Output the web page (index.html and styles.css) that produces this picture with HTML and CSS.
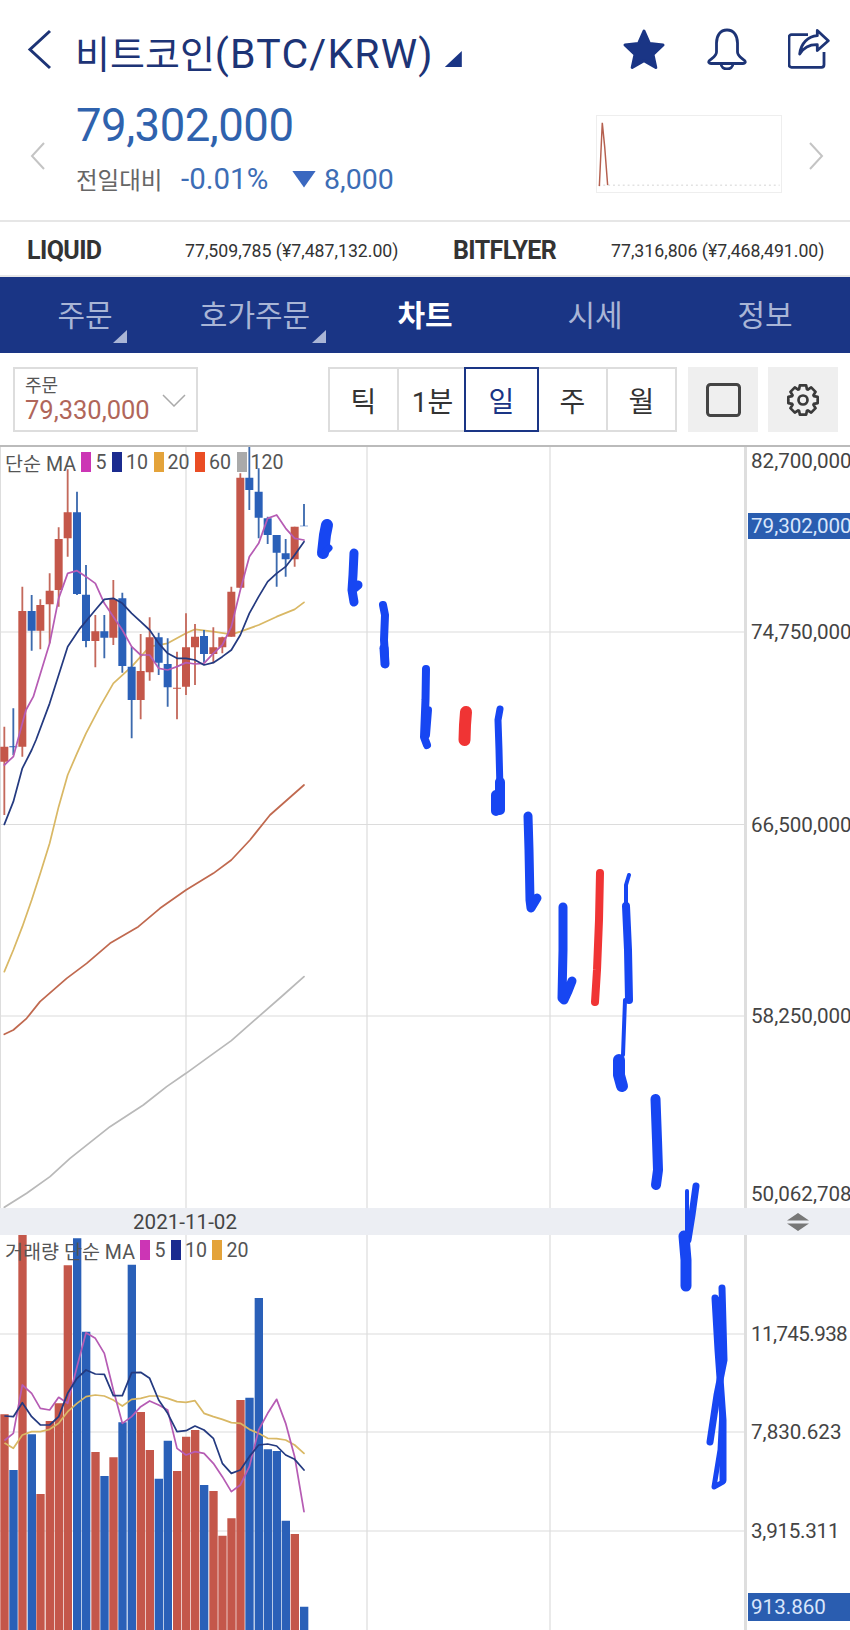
FILE: index.html
```html
<!DOCTYPE html>
<html lang="ko">
<head>
<meta charset="utf-8">
<title>비트코인 차트</title>
<link rel="stylesheet" href="styles.css">
</head>
<body>
<div class="page">
  <header class="head">
    <svg class="back" viewBox="0 0 25 41"><path d="M23 2 3 20.500 23 39"/></svg>
    <h1 class="title">비트코인<span class="title-latin">(BTC/KRW)</span></h1>
    <span class="title-tri"></span>
    <div class="head-icons">
      <svg class="i-star" viewBox="0 0 44 42"><path d="M22 3 27.500 15.500 41 17 31 26.500 33.800 39.500 22 32.800 10.200 39.500 13 26.500 3 17 16.500 15.500z"/></svg>
      <svg class="i-bell" viewBox="0 0 40 42"><path d="M20 2C13 2 9.500 8 9.500 15V24C9.500 28 5 30 2.500 32.500 1 34 2 35.500 4 35.500H36C38 35.500 39 34 37.500 32.500 35 30 30.500 28 30.500 24V15C30.500 8 27 2 20 2ZM14 35.500C14 39 17 41 20 41S26 39 26 35.500"/></svg>
      <svg class="i-share" viewBox="0 0 42 41"><path d="M20 5.700H3.500A2.500 2.500 0 0 0 1 8.200V35.800A2.500 2.500 0 0 0 3.500 38.300H33.500A2.500 2.500 0 0 0 36 35.800V23"/><path d="M29.300 1.500 40.300 11.700 29.300 21.500V15.700C22 15.500 16 18 11.700 25 13 14 20 7.500 29.300 6.700Z"/></svg>
    </div>
  </header>

  <section class="quote">
    <svg class="pager" viewBox="0 0 15 28"><path d="M14 1 2 14l12 13"/></svg>
    <div class="quote-main">
      <div class="price">79,302,000</div>
      <div class="change">
        <span class="change-label">전일대비</span>
        <span class="change-rate">-0.01%</span>
        <span class="change-tri"></span>
        <span class="change-val">8,000</span>
      </div>
    </div>
    <div class="spark">
      <svg viewBox="0 0 186 78"><path class="spark-dots" d="M0 71h186"/><path class="spark-line" d="M1 72 4 7l2.500 25 3 39"/></svg>
    </div>
    <svg class="pager" viewBox="0 0 15 28"><path d="M1 1l12 13L1 27"/></svg>
  </section>

  <section class="exch">
    <strong>LIQUID</strong><span>77,509,785 (¥7,487,132.00)</span>
    <strong>BITFLYER</strong><span>77,316,806 (¥7,468,491.00)</span>
  </section>

  <nav class="tabs">
    <a class="tab has-tri">주문</a>
    <a class="tab has-tri">호가주문</a>
    <a class="tab active">차트</a>
    <a class="tab">시세</a>
    <a class="tab">정보</a>
  </nav>

  <section class="tools">
    <div class="select">
      <div class="select-text"><span class="select-label">주문</span><span class="select-val">79,330,000</span></div>
      <svg viewBox="0 0 24 13"><path d="M1 1l11 11L23 1"/></svg>
    </div>
    <div class="seg">
      <span>틱</span><span>1분</span><span class="on">일</span><span>주</span><span>월</span>
    </div>
    <div class="btn btn-first"><svg class="i-square" viewBox="0 0 35 34"><rect x="1.500" y="1.500" width="32" height="31" rx="3"/></svg></div>
    <div class="btn"><svg class="i-gear" viewBox="-17 -17 34 34"><circle r="4.500"/><path d="M10.810-3.930 14.670-3.120V3.120L10.810 3.930 10.420 4.860 12.580 8.170 8.170 12.580 4.860 10.420 3.930 10.810 3.120 14.670H-3.120L-3.930 10.810-4.860 10.420-8.170 12.580-12.580 8.170-10.420 4.860-10.810 3.930-14.670 3.120V-3.120L-10.810-3.930-10.420-4.860-12.580-8.170-8.170-12.580-4.860-10.420-3.930-10.810-3.120-14.670H3.120L3.930-10.810 4.860-10.420 8.170-12.580 12.580-8.170 10.420-4.860Z"/></svg></div>
  </section>

  <section class="chart">
    <div class="pane pane-price">
      <svg class="plot" viewBox="0 445 747 763">
        <path class="grid" d="M186 445V1208M367 445V1208M550 445V1208M0 632H746M0 824.500H746M0 1016H746"/>
        <path class="frame" d="M745.500 445V1208"/>
        <path class="frame-left" d="M.5 445V1208"/>
        <g transform="translate(0 440) scale(.33333)">
          <path class="ma ma120" d="M13 2302 80 2260 150 2210 210 2155 330 2060 430 1995 500 1940 558 1900 620 1855 694 1802 770 1735 850 1665 912 1610"/>
          <path class="ma ma60" d="M13 1783 40 1770 80 1735 120 1685 200 1615 260 1570 330 1510 415 1460 480 1405 558 1350 640 1300 694 1260 750 1200 810 1125 912 1035"/>
          <path class="ma ma20" d="M13 1595 40 1530 67 1460 95 1380 121 1300 149 1210 176 1100 203 1005 231 940 258 880 300 800 340 730 395 680 449 620 503 610 558 580 585 568 640 575 694 583 721 575 776 555 830 530 884 508 912 487"/>
          <path class="wick red" d="M13 860V1125M67 440V950M121 478V628M149 400V610M176 262V500M203 88V350M286 525V682M340 420V615M422 582V838M449 532V722M531 635V838M558 520V765M585 552V735M640 562V670M667 590V640M694 440V590M721 100V445M884 260V380"/>
          <path class="wick blue" d="M40 805V945M95 465V632M231 155V465M258 375V622M313 525V655M367 458V698M395 620V895M476 578V705M503 595V800M612 570V668M748 20V210M776 85V295M803 230V312M830 285V440M857 297V410M912 192V258"/>
          <path class="body red" d="M1 920h24V965H1zM55 513h24V920H55zM109 495h24V572h-24zM137 452h24V493h-24zM164 297h24V450h-24zM191 217h24V295h-24zM274 574h24V603h-24zM328 477h24V593h-24zM410 693h24V780h-24zM437 592h24V697h-24zM519 743h24V746h-24zM546 622h24V740h-24zM573 590h24V622h-24zM628 622h24V642h-24zM655 592h24V622h-24zM682 455h24V590h-24zM709 113h24V443h-24zM872 260h24V358h-24z"/>
          <path class="body blue" d="M28 919h24V922H28zM83 513h24V572H83zM219 217h24V462h-24zM246 464h24V603h-24zM301 574h24V593h-24zM355 475h24V678h-24zM383 680h24V780h-24zM464 592h24V668h-24zM491 672h24V742h-24zM600 588h24V642h-24zM736 113h24V150h-24zM764 155h24V233h-24zM791 235h24V285h-24zM818 285h24V338h-24zM845 340h24V358h-24zM900 257h24V259h-24z"/>
          <path class="ma ma5" d="M13 975 40 950 67 850 78 810 100 770 149 610 176 475 203 400 231 392 258 410 286 430 313 490 340 530 367 570 395 620 422 645 449 645 476 685 503 690 531 680 558 668 585 672 612 670 640 640 667 615 694 560 721 450 748 350 776 310 803 235 830 225 857 265 884 295 912 300"/>
          <path class="ma ma10" d="M13 1153 40 1085 67 985 95 930 108 900 149 790 203 620 240 565 286 510 313 478 340 475 367 490 395 520 422 545 449 570 476 610 503 640 531 655 558 655 585 660 612 675 640 668 667 650 694 630 721 585 748 520 776 470 803 425 830 400 857 380 884 345 912 305"/>
        </g>
      </svg>
      <div class="legend">
        <span class="leg-name">단순 MA</span>
        <i class="sw c5"></i><span>5</span>
        <i class="sw c10"></i><span>10</span>
        <i class="sw c20"></i><span>20</span>
        <i class="sw c60"></i><span>60</span>
        <i class="sw c120"></i><span>120</span>
      </div>
      <div class="axis">
        <span class="tick t1">82,700,000</span>
        <span class="tick now">79,302,000</span>
        <span class="tick t2">74,750,000</span>
        <span class="tick t3">66,500,000</span>
        <span class="tick t4">58,250,000</span>
        <span class="tick t5">50,062,708</span>
      </div>
    </div>

    <div class="split">
      <span class="split-date">2021-11-02</span>
      <svg class="split-handle" viewBox="0 0 22 18"><path d="M11 0l11 7.500H0zM11 18 0 10.500h22z"/></svg>
    </div>

    <div class="pane pane-vol">
      <svg class="plot" viewBox="0 1235 747 395">
        <path class="grid" d="M186 1235V1630M367 1235V1630M550 1235V1630M0 1334H746M0 1432H746M0 1531H746"/>
        <path class="frame" d="M745.500 1235V1630"/>
        <g transform="translate(0 1190) scale(.33333)">
          <path class="body red" d="M1 673h25V1320H1zM55 135h25V1320H55zM109 912h25V1320h-25zM137 693h25V1320h-25zM164 640h25V1320h-25zM191 226h25V1320h-25zM274 786h25V1320h-25zM328 802h25V1320h-25zM410 666h25V1320h-25zM437 780h25V1320h-25zM519 843h25V1320h-25zM546 740h25V1320h-25zM573 720h25V1320h-25zM628 903h25V1320h-25zM655 1037h25V1320h-25zM682 985h25V1320h-25zM709 630h25V1320h-25zM872 1032h25V1320h-25z"/>
          <path class="body blue" d="M28 840h25V1320H28zM83 733h25V1320H83zM219 145h25V1320h-25zM246 425h25V1320h-25zM301 858h25V1320h-25zM355 697h25V1320h-25zM383 224h25V1320h-25zM464 866h25V1320h-25zM491 752h25V1320h-25zM600 885h25V1320h-25zM736 623h25V1320h-25zM764 324h25V1320h-25zM791 778h25V1320h-25zM818 783h25V1320h-25zM845 992h25V1320h-25zM900 1250h25V1320h-25z"/>
          <path class="ma ma20" d="M15 760 40 775 67 735 95 725 121 725 149 718 176 700 203 665 231 640 258 620 286 615 313 618 340 630 367 648 395 628 422 625 449 618 476 618 503 625 531 635 558 637 585 632 612 670 640 680 667 688 694 698 721 700 748 718 776 730 803 745 830 746 857 750 884 765 912 790"/>
          <path class="ma ma5" d="M15 750 40 730 67 585 95 610 121 655 149 660 176 622 203 640 231 530 258 428 286 445 313 490 340 600 367 700 395 680 422 650 449 633 476 645 503 660 531 775 558 795 585 785 612 790 640 820 667 860 694 905 721 885 748 830 776 720 803 670 830 628 857 700 884 800 912 965"/>
          <path class="ma ma10" d="M15 678 40 680 67 638 95 680 121 705 149 705 176 680 203 610 231 565 258 540 286 552 313 553 340 617 367 617 395 548 422 547 449 565 476 630 503 670 531 725 558 722 585 708 612 720 640 745 667 820 694 850 721 840 748 800 776 765 803 762 830 768 857 795 884 808 912 840"/>
        </g>
      </svg>
      <div class="legend">
        <span class="leg-name">거래량 단순 MA</span>
        <i class="sw c5"></i><span>5</span>
        <i class="sw c10"></i><span>10</span>
        <i class="sw c20"></i><span>20</span>
      </div>
      <div class="axis">
        <span class="tick v1">11,745.938</span>
        <span class="tick v2">7,830.623</span>
        <span class="tick v3">3,915.311</span>
        <span class="tick now-vol">913.860</span>
      </div>
    </div>

    <svg class="ink" viewBox="0 445 850 1185">
      <path class="pen w12" d="M327 525 325 535 323 553"/>
      <path class="pen w7" d="M324 553 329 548"/>
      <path class="pen w9" d="M354 553 353 575 352 590 354 602M352 590 358 585"/>
      <path class="pen w8" d="M383 605 385 615 384 640 385 655 385 664"/>
      <path class="pen w9" d="M384 648 385 664"/>
      <path class="pen w8" d="M426 669 425.500 700 424 737 427 745M428 710 426 735"/>
      <path class="pen-red w12" d="M466 712 465 725 464.500 740"/>
      <path class="pen w7" d="M500 709 498 720 499 750 500 790"/>
      <path class="pen w10" d="M500 782V810M496 795V811"/>
      <path class="pen w9" d="M528 816 529 850 530 900 531 908 537 898"/>
      <path class="pen w9" d="M563 907 563 950 562 998 564 1000Q568 992 572 981"/>
      <path class="pen-red w8" d="M600 873 599 920 597 970 595 1002"/>
      <path class="pen w4" d="M629 875 626 885 626 906M625 1000 623 1055"/>
      <path class="pen w8" d="M626 906 628 950 629 1000"/>
      <path class="pen w12" d="M619 1060V1075L622 1086"/>
      <path class="pen w10" d="M655.500 1099 657 1140 658 1170 656 1185"/>
      <path class="pen w4" d="M687 1191V1235"/>
      <path class="pen w7" d="M696 1186 692 1215 688 1240"/>
      <path class="pen w11" d="M684 1236 686 1260V1286"/>
      <path class="pen w7" d="M715 1298 718 1350 723 1420V1480"/>
      <path class="pen w7" d="M722 1288 724 1360 717 1395 710 1442"/>
      <path class="pen w7" d="M720 1300 720 1360"/>
      <path class="pen w5" d="M723 1482 714 1487 720 1450 722 1410"/>
    </svg>
  </section>
</div>
</body>
</html>
```

FILE: styles.css
```css
* { box-sizing: border-box; }
html, body { margin: 0; padding: 0; background: #fff; }
body { font-family: Roboto, "Noto Sans CJK KR", sans-serif; color: #333; }
.page { width: 850px; height: 1630px; overflow: hidden; }
svg { display: block; }

.head { height: 98px; display: flex; align-items: center; padding-left: 27px; color: #1d3476; }
.back { width: 25px; height: 41px; fill: none; stroke: #1d3476; stroke-width: 3; }
.title { margin: 4px 0 0 23px; font-size: 38px; font-weight: 400; white-space: nowrap; }
.title-latin { font-size: 41px; letter-spacing: 1.200px; }
.title-tri { align-self: flex-start; margin: 51px 0 0 11px; width: 17px; height: 16px; background: #1a3585; clip-path: polygon(100% 0, 100% 100%, 0 100%); }
.head-icons { margin-left: auto; display: flex; align-items: center; gap: 41px; padding-right: 20px; }
.i-star { width: 44px; height: 42px; fill: #1a3585; stroke: #1a3585; stroke-width: 3; stroke-linejoin: round; }
.i-bell { width: 40px; height: 42px; fill: none; stroke: #1d3476; stroke-width: 2.800; stroke-linejoin: round; stroke-linecap: round; }
.i-share { width: 42px; height: 41px; fill: none; stroke: #1d3476; stroke-width: 2.800; stroke-linejoin: round; }

.quote { height: 124px; display: flex; align-items: flex-start; padding: 0 26px 0 30px; border-bottom: 2px solid #e6e6e6; }
.pager { width: 15px; height: 28px; margin-top: 44px; fill: none; stroke: #c4c4c4; stroke-width: 2; flex: none; }
.quote-main { flex: 1; margin-left: 31px; padding-top: 2px; }
.price { font-size: 45.500px; line-height: 52px; color: #2f62ad; letter-spacing: -.5px; }
.change { display: flex; align-items: center; margin-top: 12px; height: 30px; }
.change-label { font-size: 23.500px; color: #666; width: 105px; white-space: nowrap; }
.change-rate { font-size: 29.500px; color: #3d6db5; width: 111px; }
.change-tri { width: 24px; height: 17px; background: #3a68c0; clip-path: polygon(0 0, 100% 0, 50% 100%); margin-right: 8px; }
.change-val { font-size: 28.500px; color: #3d6db5; }
.spark { width: 186px; height: 78px; margin: 17px 27px 0 0; border: 1px solid #eee; flex: none; }
.spark svg { width: 100%; height: 100%; fill: none; }
.spark-dots { stroke: #e2e2e2; stroke-dasharray: 2 3; stroke-width: 1.500; }
.spark-line { stroke: #b5604f; stroke-width: 1.500; }

.exch { height: 55px; display: grid; grid-template-columns: 158px 268px 158px 1fr; align-items: center; padding: 4px 0 0 27px; border-bottom: 2px solid #e8e8e8; color: #333; }
.exch strong { font-size: 25px; font-weight: 700; letter-spacing: -.6px; }
.exch span { font-size: 17.700px; white-space: nowrap; }

.tabs { height: 76px; background: #1a3585; display: grid; grid-template-columns: repeat(5, 170px); }
.tab { position: relative; display: flex; align-items: center; justify-content: center; padding-bottom: 4px; font-size: 30px; color: #a9b5d6; }
.tab.active { color: #fff; font-weight: 700; }
.has-tri::after { content: ""; position: absolute; bottom: 10px; width: 14px; height: 13px; background: #a9b5d6; clip-path: polygon(100% 0, 100% 100%, 0 100%); }
.tab:nth-child(1)::after { left: 113px; }
.tab:nth-child(2)::after { left: 142px; }

.tools { height: 92px; display: flex; align-items: flex-start; padding: 14px 12px 0 13px; }
.select { width: 185px; height: 65px; border: 2px solid #ddd; display: flex; align-items: center; justify-content: space-between; padding: 0 10px 0 10px; flex: none; }
.select-text { display: flex; flex-direction: column; }
.select-label { font-size: 18px; line-height: 22px; color: #555; }
.select-val { font-size: 25.500px; line-height: 27px; color: #b0665a; }
.select svg { width: 24px; height: 13px; fill: none; stroke: #aaa; stroke-width: 1.500; margin-top: 2px; }
.seg { margin-left: 130px; width: 349px; height: 65px; display: grid; grid-template-columns: 67px 69px 71px 69px 1fr; border: 2px solid #ddd; flex: none; }
.seg span { display: flex; align-items: center; justify-content: center; font-size: 28px; color: #333; border-left: 2px solid #ddd; }
.seg span:first-child { border-left: 0; }
.seg .on { color: #1a3585; outline: 2px solid #1a3585; outline-offset: 0; border-left: 0; position: relative; }
.btn { width: 70px; height: 65px; background: #efefef; display: flex; align-items: center; justify-content: center; margin-left: 10px; flex: none; }
.btn-first { margin-left: 11px; }
.i-square { width: 35px; height: 34px; fill: none; stroke: #444; stroke-width: 3; }
.i-gear { width: 34px; height: 34px; fill: none; stroke: #3a3a3a; stroke-width: 2.700; stroke-linejoin: round; }

.chart { position: relative; border-top: 2px solid #bbb; }
.pane { position: relative; overflow: hidden; }
.pane-price { height: 761px; }
.pane-vol { height: 395px; }
.plot { width: 747px; height: 395px; }
.pane-price .plot { height: 763px; margin-top: -2px; }
.grid { stroke: #dcdcdc; stroke-width: 1.200; fill: none; }
.frame { stroke: #dedede; stroke-width: 3; fill: none; }
.frame-left { stroke: #ddd; stroke-width: 1; fill: none; }
.ma { fill: none; stroke-width: 5.200; stroke-linejoin: round; stroke-linecap: round; }
.ma5 { stroke: #b65cb4; }
.ma10 { stroke: #243a80; }
.ma20 { stroke: #d9b865; }
.ma60 { stroke: #c0694f; }
.ma120 { stroke: #b9b9b9; }
.wick { fill: none; stroke-width: 5.500; }
.wick.red { stroke: #c4695c; }
.wick.blue { stroke: #3c6aae; }
.body.red { fill: #c4574a; }
.body.blue { fill: #2a60b8; }

.legend { position: absolute; left: 5px; top: 5px; display: flex; align-items: center; font-size: 19.600px; color: #555; height: 20px; }
.sw { display: block; width: 10px; height: 20px; margin: 0 4px 0 5.500px; }
.c5 { background: #cc35b5; }
.c10 { background: #1b2b8f; }
.c20 { background: #e4a33a; }
.c60 { background: #ea4d24; }
.c120 { background: #aaa; }

.axis { position: absolute; top: 0; right: 0; bottom: 0; width: 103px; overflow: hidden; }
.tick { position: absolute; left: 4px; font-size: 20.600px; line-height: 26px; color: #444; white-space: nowrap; }
.t1 { top: 1px; }
.t2 { top: 172px; }
.t3 { top: 365px; }
.t4 { top: 556px; }
.t5 { top: 734px; }
.now, .now-vol { left: 1px; right: 0; height: 26px; padding-left: 3px; background: #2a5db0; color: #d9e6fb; }
.now { top: 66px; }
.v1 { top: 86px; letter-spacing: -.6px; }
.v2 { top: 184px; }
.v3 { top: 283px; letter-spacing: -.25px; }
.now-vol { top: 358px; height: 28px; line-height: 28px; }

.split { position: relative; height: 27px; background: #eceef3; }
.split-date { position: absolute; left: 133px; top: 0; font-size: 20.600px; line-height: 28px; color: #444; }
.split-handle { position: absolute; left: 787px; top: 5px; width: 22px; height: 18px; fill: #777; }

.ink { position: absolute; left: 0; top: -2px; width: 850px; height: 1185px; pointer-events: none; overflow: hidden; }
.pen, .pen-red { fill: none; stroke-linecap: round; stroke-linejoin: round; stroke: #1746f2; }
.pen-red { stroke: #f03434; }
.w4 { stroke-width: 4; }
.w5 { stroke-width: 5; }
.w7 { stroke-width: 7; }
.w8 { stroke-width: 8; }
.w9 { stroke-width: 9; }
.w10 { stroke-width: 10; }
.w11 { stroke-width: 11; }
.w12 { stroke-width: 12; }
```
